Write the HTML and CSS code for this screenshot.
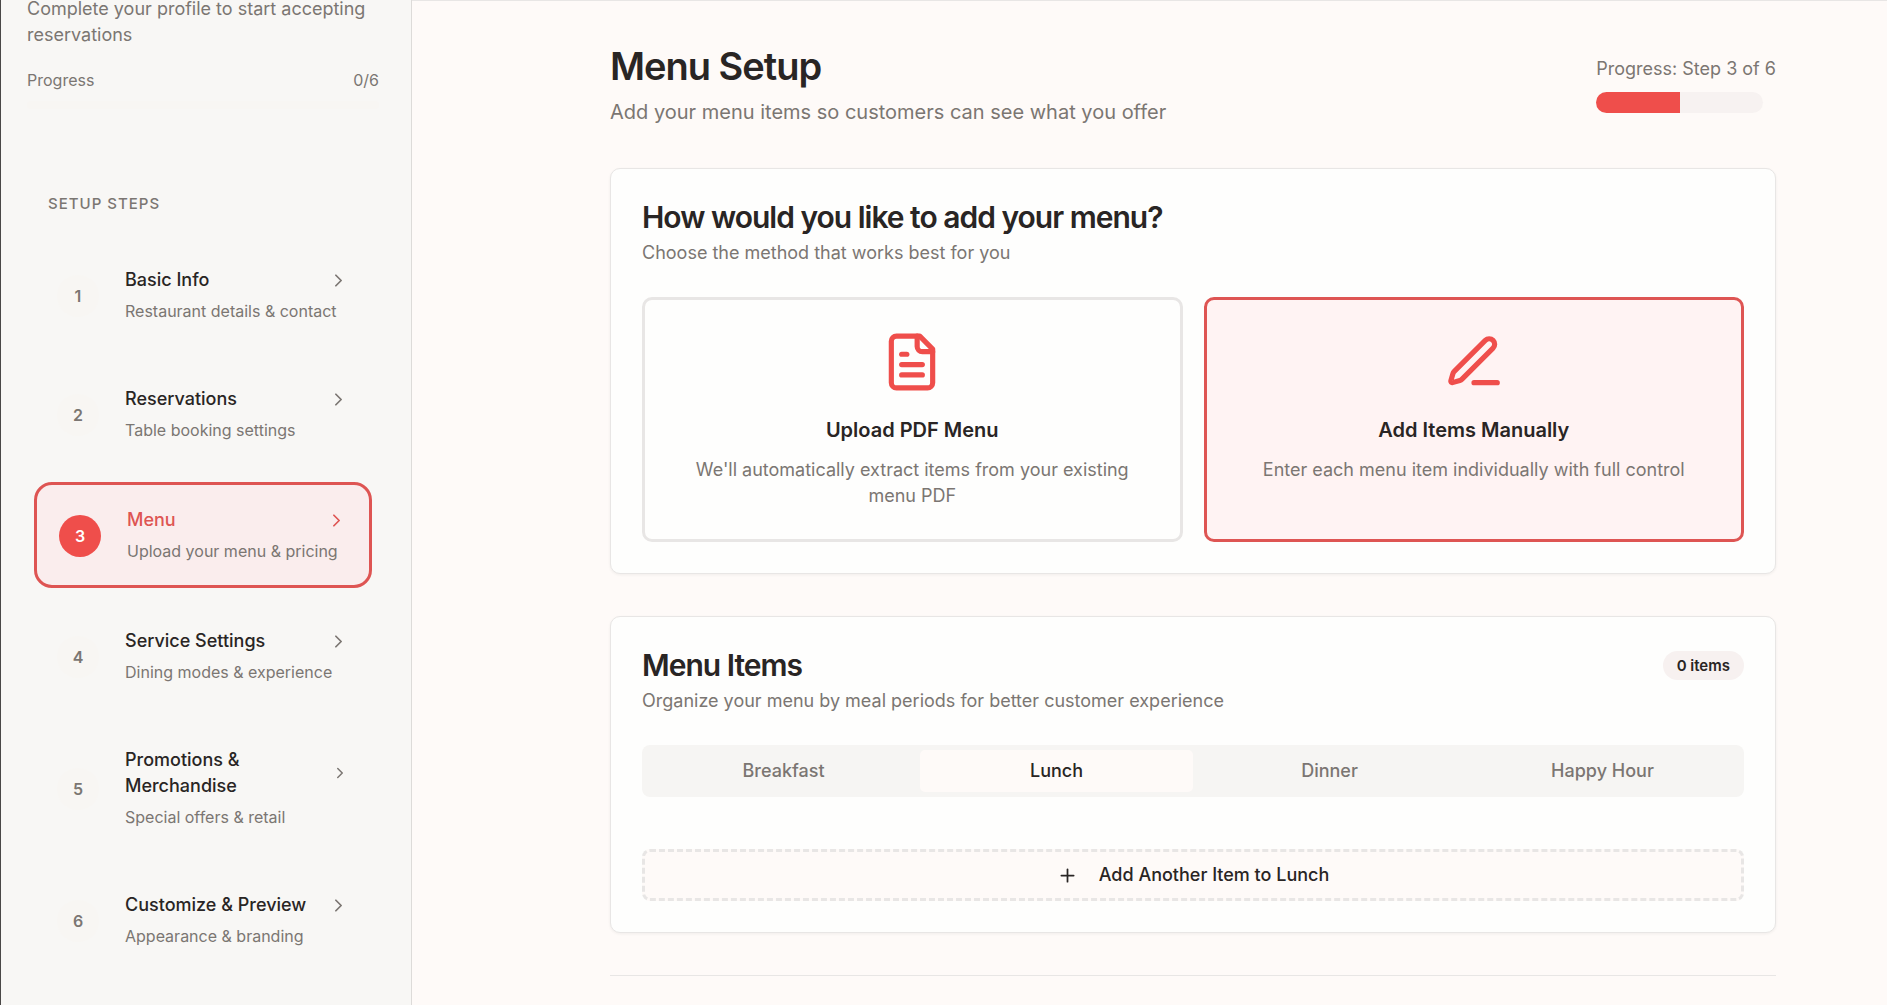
FILE: index.html
```html
<!DOCTYPE html>
<html lang="en">
<head>
<meta charset="utf-8">
<title>Menu Setup</title>
<meta name="viewport" content="width=device-width, initial-scale=1">
<link rel="stylesheet" href="styles.css">
</head>
<body>
<svg class="sprite" aria-hidden="true">
  <symbol id="chevron" viewBox="0 0 24 24"><path d="m9 18 6-6-6-6"/></symbol>
</svg>
<div class="app">
  <aside class="sidebar">
    <div class="intro">
      <p class="intro-text">Complete your profile to start accepting reservations</p>
      <div class="intro-progress"><span>Progress</span><span>0/6</span></div>
      <div class="intro-bar"></div>
    </div>
    <nav class="steps" aria-labelledby="steps-title">
      <h2 class="steps-title" id="steps-title">SETUP STEPS</h2>
      <a class="step" href="#basic">
        <span class="num">1</span>
        <span class="step-body">
          <span class="step-head"><span>Basic Info</span><svg class="icon chevron"><use href="#chevron"/></svg></span>
          <span class="step-sub">Restaurant details &amp; contact</span>
        </span>
      </a>
      <a class="step" href="#reservations">
        <span class="num">2</span>
        <span class="step-body">
          <span class="step-head"><span>Reservations</span><svg class="icon chevron"><use href="#chevron"/></svg></span>
          <span class="step-sub">Table booking settings</span>
        </span>
      </a>
      <a class="step active" href="#menu" aria-current="step">
        <span class="num">3</span>
        <span class="step-body">
          <span class="step-head"><span>Menu</span><svg class="icon chevron"><use href="#chevron"/></svg></span>
          <span class="step-sub">Upload your menu &amp; pricing</span>
        </span>
      </a>
      <a class="step" href="#service">
        <span class="num">4</span>
        <span class="step-body">
          <span class="step-head"><span>Service Settings</span><svg class="icon chevron"><use href="#chevron"/></svg></span>
          <span class="step-sub">Dining modes &amp; experience</span>
        </span>
      </a>
      <a class="step" href="#promotions">
        <span class="num">5</span>
        <span class="step-body">
          <span class="step-head"><span>Promotions &amp;<br>Merchandise</span><svg class="icon chevron small"><use href="#chevron"/></svg></span>
          <span class="step-sub">Special offers &amp; retail</span>
        </span>
      </a>
      <a class="step" href="#customize">
        <span class="num">6</span>
        <span class="step-body">
          <span class="step-head"><span>Customize &amp; Preview</span><svg class="icon chevron"><use href="#chevron"/></svg></span>
          <span class="step-sub">Appearance &amp; branding</span>
        </span>
      </a>
    </nav>
  </aside>

  <main class="main">
    <header class="page-head">
      <div>
        <h1 class="page-title">Menu Setup</h1>
        <p class="page-sub">Add your menu items so customers can see what you offer</p>
      </div>
      <div class="page-progress">
        <p class="muted">Progress: Step 3 of 6</p>
        <div class="bar"><div class="bar-fill" style="width: 50%"></div></div>
      </div>
    </header>

    <section class="card">
      <div class="card-head">
        <h2 class="card-title">How would you like to add your menu?</h2>
      </div>
      <p class="muted">Choose the method that works best for you</p>
      <div class="options">
        <button class="option" type="button">
          <svg class="icon option-icon" viewBox="0 0 24 24"><path d="M15 2H6a2 2 0 0 0-2 2v16a2 2 0 0 0 2 2h12a2 2 0 0 0 2-2V7Z"/><path d="M14 2v4a2 2 0 0 0 2 2h4"/><path d="M10 9H8"/><path d="M16 13H8"/><path d="M16 17H8"/></svg>
          <span class="option-title">Upload PDF Menu</span>
          <span class="muted">We'll automatically extract items from your existing menu PDF</span>
        </button>
        <button class="option selected" type="button" aria-pressed="true">
          <svg class="icon option-icon" viewBox="0 0 24 24"><path d="M12 20h9"/><path d="M16.376 3.622a1 1 0 0 1 3.002 3.002L7.368 18.635a2 2 0 0 1-.855.506l-2.872.838a.5.5 0 0 1-.62-.62l.838-2.872a2 2 0 0 1 .506-.854z"/></svg>
          <span class="option-title">Add Items Manually</span>
          <span class="muted">Enter each menu item individually with full control</span>
        </button>
      </div>
    </section>

    <section class="card">
      <div class="card-head">
        <h2 class="card-title">Menu Items</h2>
        <span class="badge">0 items</span>
      </div>
      <p class="muted">Organize your menu by meal periods for better customer experience</p>
      <div class="tabs" role="tablist">
        <button class="tab" type="button" role="tab">Breakfast</button>
        <button class="tab current" type="button" role="tab" aria-selected="true">Lunch</button>
        <button class="tab" type="button" role="tab">Dinner</button>
        <button class="tab" type="button" role="tab">Happy Hour</button>
      </div>
      <button class="add" type="button">
        <svg class="icon" viewBox="0 0 24 24"><path d="M5 12h14"/><path d="M12 5v14"/></svg>
        Add Another Item to Lunch
      </button>
    </section>
    <hr class="rule">
  </main>
</div>
</body>
</html>
```
FILE: styles.css
```css
:root {
  --ink: #292524;
  --muted: #7b7672;
  --line: #e8e6e5;
  --red: #ef4e4b;
  --red-line: #de5553;
  --page: #fefaf8;
}
* { box-sizing: border-box; margin: 0; }
body {
  background: var(--page);
  color: var(--ink);
  font: 400 18px/26px Inter, "Liberation Sans", sans-serif;
}
button { font: inherit; color: inherit; }
.sprite { display: none; }
.icon {
  width: 21px;
  height: 21px;
  flex: none;
  fill: none;
  stroke: currentColor;
  stroke-width: 2;
  stroke-linecap: round;
  stroke-linejoin: round;
}
.muted { color: var(--muted); }

.app { display: flex; min-height: 100vh; }

/* Sidebar */
.sidebar {
  width: 412px;
  flex: none;
  background: #f8f7f5;
  border-left: 1px solid #4a4847;
  border-right: 1px solid #dddbd9;
}
.intro { margin-top: -4px; padding: 0 32px 0 26px; color: var(--muted); }
.intro-progress {
  display: flex;
  justify-content: space-between;
  margin-top: 19px;
  font-size: 16px;
}
.intro-bar { height: 8px; margin-top: 8px; border-radius: 4px; background: #f8f6f3; }
.steps {
  display: flex;
  flex-direction: column;
  gap: 17px;
  padding: 82px 39px 0 33px;
}
.steps-title {
  margin-bottom: 10px;
  padding-left: 14px;
  color: var(--muted);
  font-size: 15px;
  font-weight: 500;
  letter-spacing: 1px;
}
.step {
  display: flex;
  align-items: center;
  gap: 26px;
  padding: 22px 22px 21px;
  border: 1px solid transparent;
  border-radius: 18px;
  color: var(--ink);
  text-decoration: none;
}
.num {
  width: 42px;
  height: 42px;
  flex: none;
  border-radius: 50%;
  background: #f8f6f3;
  color: var(--muted);
  font-size: 16px;
  font-weight: 600;
  line-height: 42px;
  text-align: center;
}
.step-body { display: flex; flex: 1; flex-direction: column; gap: 5px; min-width: 0; }
.step-head {
  display: flex;
  align-items: center;
  justify-content: space-between;
  font-weight: 500;
  white-space: nowrap;
}
.step-sub { color: var(--muted); font-size: 16px; white-space: nowrap; }
.chevron { color: var(--muted); }
.chevron.small { width: 18px; height: 18px; }
.step.active { border: 3px solid var(--red-line); background: #faeded; }
.active .num { background: var(--red); color: #fff; }
.active .step-head, .active .chevron { color: var(--red-line); }

/* Main column */
.main {
  display: flex;
  flex: 1;
  flex-direction: column;
  gap: 42px;
  min-width: 0;
  padding: 42px 111px 0 198px;
  border-top: 1px solid var(--line);
}
.page-head { display: flex; align-items: center; justify-content: space-between; }
.page-title {
  font-size: 38px;
  font-weight: 600;
  line-height: 47px;
  letter-spacing: -1px;
}
.page-sub { margin-top: 8px; color: var(--muted); font-size: 20px; line-height: 28px; }
.bar {
  width: 167px;
  height: 21px;
  margin-top: 10px;
  overflow: hidden;
  border-radius: 11px;
  background: #f7f2f1;
}
.bar-fill { height: 100%; background: var(--red); }

.card {
  padding: 31px;
  border: 1px solid var(--line);
  border-radius: 10px;
  background: #fefefd;
  box-shadow: 0 1px 3px rgb(41 37 36 / 6%);
}
.card-head {
  display: flex;
  align-items: center;
  justify-content: space-between;
  margin-bottom: 6px;
}
.card-title {
  font-size: 30px;
  font-weight: 600;
  line-height: 34px;
  letter-spacing: -1px;
}
.options { display: grid; grid-template-columns: 1fr 1fr; gap: 21px; margin-top: 31px; }
.option {
  display: flex;
  flex-direction: column;
  align-items: center;
  padding: 31px 31px 30px;
  border: 3px solid var(--line);
  border-radius: 10px;
  background: transparent;
  text-align: center;
}
.option.selected { border-color: var(--red-line); background: #fff3f3; }
.option-icon { width: 62px; height: 62px; color: var(--red); }
.option-title {
  margin: 20px 0 10px;
  font-size: 20px;
  font-weight: 600;
  line-height: 34px;
}
.badge {
  padding: 0 14px;
  border-radius: 15px;
  background: #f7f1f0;
  font-size: 15px;
  font-weight: 600;
  line-height: 29px;
}
.tabs {
  display: grid;
  grid-template-columns: repeat(4, 1fr);
  margin-top: 31px;
  padding: 5px;
  border-radius: 8px;
  background: #f6f5f3;
}
.tab {
  height: 42px;
  padding: 0;
  border: 0;
  border-radius: 5px;
  background: transparent;
  color: var(--muted);
  font-weight: 500;
}
.tab.current { background: var(--page); color: var(--ink); }
.add {
  display: flex;
  align-items: center;
  justify-content: center;
  gap: 21px;
  width: 100%;
  height: 52px;
  margin-top: 52px;
  border: 3px dashed var(--line);
  border-radius: 8px;
  background: var(--page);
  font-weight: 500;
}
.rule { width: 100%; border: 0; border-top: 1px solid var(--line); }
```
